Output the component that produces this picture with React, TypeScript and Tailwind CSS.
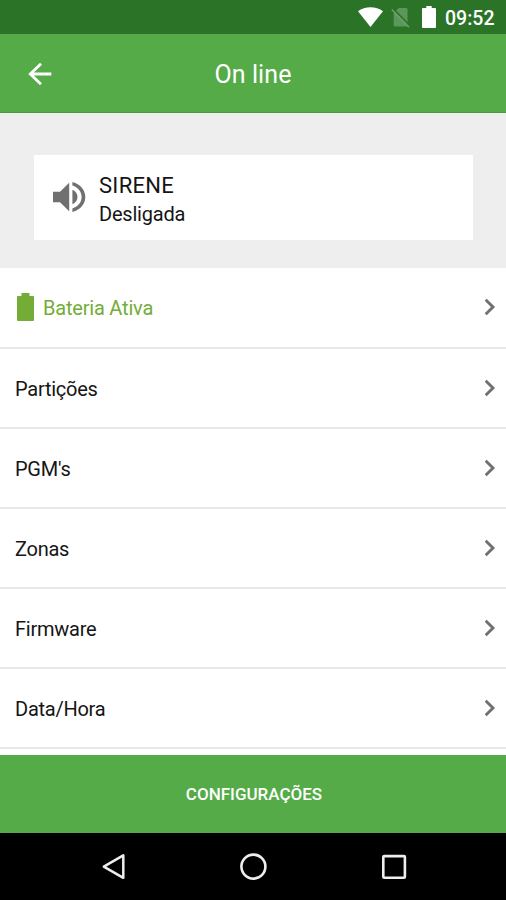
const rows = ["Partições", "PGM's", "Zonas", "Firmware", "Data/Hora"];

function Chevron() {
  return (
    <svg className="mr-[10px] h-[18px] w-[12px] shrink-0" viewBox="0 0 12 18" fill="none">
      <path d="M1.7 1.8 9 9l-7.3 7.2" stroke="#707070" strokeWidth="2.9" />
    </svg>
  );
}

function StatusBar() {
  return (
    <div className="flex h-[34px] shrink-0 items-center bg-[#2b7327] pl-[358px] text-white">
      <svg className="h-[20px] w-[25px] shrink-0" viewBox="0 0 25 20">
        <path d="M0 4.3C7 -1.2 18 -1.2 25 4.3L12.5 20z" fill="#fff" />
      </svg>
      <svg className="ml-[8px] mt-[1px] h-[20px] w-[20px] shrink-0" viewBox="0 0 20 20">
        <path d="M7.5 0H15.2a1.3 1.3 0 0 1 1.3 1.3V17.3a1.3 1.3 0 0 1-1.3 1.3H4a1.3 1.3 0 0 1-1.3-1.3V5z" fill="#5b965a" />
        <path d="M2.2 .8 19 18.2" stroke="#2b7327" strokeWidth="1.8" />
        <path d="M.8 1.6 18 19.2" stroke="#6fa26d" strokeWidth="1.5" />
      </svg>
      <svg className="ml-[11px] h-[22px] w-[14px] shrink-0" viewBox="0 0 14 22">
        <path d="M4.3 0h5.4v2H13q1 0 1 1v18q0 1-1 1H1q-1 0-1-1V3q0-1 1-1h3.3z" fill="#fff" />
      </svg>
      <span className="ml-[9px] mt-[4px] text-[19.5px] leading-[22px] font-medium">09:52</span>
    </div>
  );
}

export default function App() {
  return (
    <div className="flex h-[900px] w-[506px] flex-col overflow-hidden bg-white font-[Roboto,sans-serif] text-[#151515]">
      <StatusBar />
      <header className="grid h-[79px] shrink-0 grid-cols-[80px_1fr_80px] items-center border-b border-[#459d34] bg-[#54ab47] text-white">
        <svg className="mt-px ml-[28px] h-[24px] w-[24px]" viewBox="0 0 24 24" fill="none">
          <path d="M23.3 12H2.5M13 1.8 2.3 12 13 22.2" stroke="#fff" strokeWidth="2.8" />
        </svg>
        <h1 className="mt-[4px] text-center text-[25px] leading-[30px] tracking-[0.1px]">On line</h1>
      </header>
      <section className="h-[155px] shrink-0 bg-[#eeeeee] pt-[42px] pr-[33px] pl-[34px]">
        <div className="flex h-[85px] items-center bg-white pl-[19px]">
          <svg className="mb-[2px] h-[30px] w-[33px] shrink-0" viewBox="0 0 33 30" fill="#707070">
            <path d="M0 9.7h7L16.2.8v28.4L7 20.3H0zM19.4 7.7c6.8 2.6 6.8 12 0 14.6z" />
            <path d="M19.4 0c17.2 4.5 17.2 25.5 0 30v-3.6c12.3-3.8 12.3-19 0-22.8z" />
          </svg>
          <div className="ml-[13px] pt-[4px]">
            <p className="text-[22px] leading-[28px] tracking-[0.3px]">SIRENE</p>
            <p className="text-[20px] leading-[28px] tracking-[-0.2px]">Desligada</p>
          </div>
        </div>
      </section>
      <main className="h-[487px] shrink-0 pt-[0.4px]">
        <div className="flex h-[80.15px] items-center justify-between border-b-2 border-[#e8e8e8] pl-[17px] text-[#73ad37]">
          <div className="flex items-center">
            <svg className="h-[28px] w-[17px]" viewBox="0 0 17 28">
              <path d="M4.5 0h8v3H16q1 0 1 1v23q0 1-1 1H1q-1 0-1-1V4q0-1 1-1h3.5z" fill="#73ad37" />
            </svg>
            <span className="ml-[9px] mt-[2px] text-[20px] leading-[24px] tracking-[-0.2px]">Bateria Ativa</span>
          </div>
          <Chevron />
        </div>
        {rows.map((row) => (
          <div key={row} className="flex h-[80.15px] items-center justify-between border-b-2 border-[#e8e8e8] pl-[15px]">
            <span className="mt-[2px] text-[20px] leading-[24px] tracking-[-0.25px]">{row}</span>
            <Chevron />
          </div>
        ))}
      </main>
      <button className="h-[78px] shrink-0 bg-[#54ab47] pt-[2px] pl-[2px] text-[17px] font-medium text-white">CONFIGURAÇÕES</button>
      <nav className="flex h-[67px] shrink-0 items-center bg-black pl-[101px]">
        <svg className="h-[28px] w-[25px]" viewBox="0 0 25 28" fill="none">
          <path d="M22.3 2.4v22.4L2.8 13.6z" stroke="#eee" strokeWidth="2.5" strokeLinejoin="round" />
        </svg>
        <svg className="ml-[113px] h-[28px] w-[28px]" viewBox="0 0 28 28" fill="none">
          <circle cx="14.4" cy="13.6" r="12" stroke="#eee" strokeWidth="2.6" />
        </svg>
        <svg className="ml-[114px] h-[26px] w-[26px]" viewBox="0 0 26 26" fill="none">
          <rect x="2.3" y="2.1" width="21.6" height="21.6" rx="1" stroke="#eee" strokeWidth="2.6" />
        </svg>
      </nav>
    </div>
  );
}
